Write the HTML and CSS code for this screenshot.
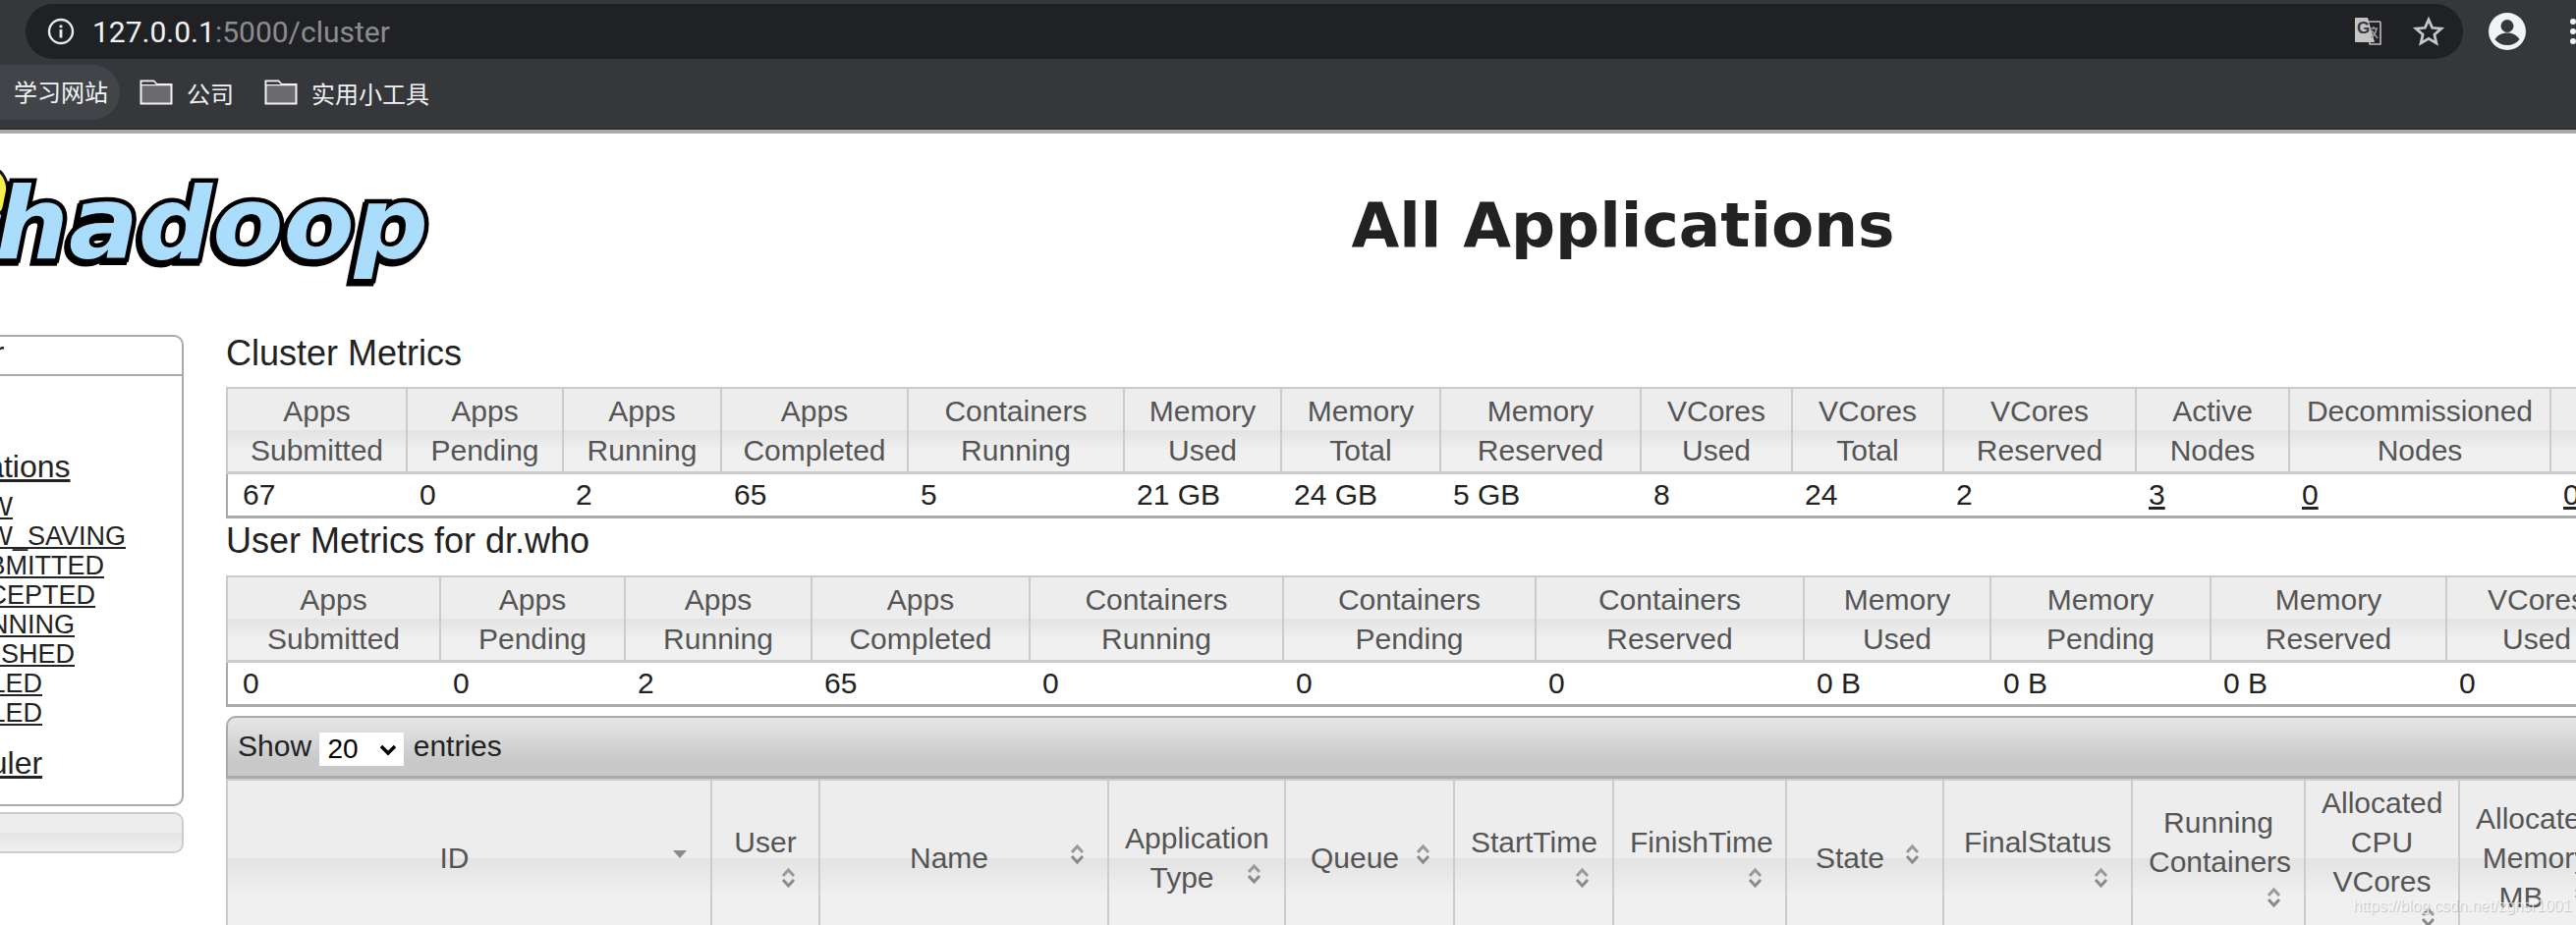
FILE: index.html
```html
<!DOCTYPE html>
<html lang="en">
<head>
<meta charset="utf-8">
<title>All Applications</title>
<link rel="stylesheet" href="styles.css">
</head>
<body>
<div class="browser">
  <div class="toolbar">
    <div class="omnibox">
      <svg class="info" width="28" height="28" viewBox="0 0 28 28"><circle cx="14" cy="14" r="12" fill="none" stroke="#e8eaed" stroke-width="2.4"/><rect x="12.6" y="12" width="2.8" height="8.5" fill="#e8eaed"/><rect x="12.6" y="7.5" width="2.8" height="2.8" fill="#e8eaed"/></svg>
      <span class="url"><span class="host">127.0.0.1</span>:5000/cluster</span>
      <svg class="translate" width="30" height="30" viewBox="0 0 30 30"><path d="M15 5h12a1 1 0 0 1 1 1v22H17z" fill="#202124" stroke="#bdbdbd" stroke-width="1.6"/><path d="M2 1h13l7 25H3a1 1 0 0 1-1-1z" fill="#c4c4c4"/><text x="4" y="17" class="translate-g">G</text><path d="M17 12h8M21 10v2M24 12c-1 5-3 8-6 9M19 14l6 8" fill="none" stroke="#9a9a9a" stroke-width="1.6"/></svg>
      <svg class="star" width="32" height="32" viewBox="0 0 32 32"><path d="M16 4l3.7 8.3 9 .9-6.8 6 2 8.8L16 23.400l-7.900 4.600 2-8.800-6.800-6 9-.9z" fill="none" stroke="#c4c5c7" stroke-width="2.800" stroke-linejoin="miter"/></svg>
    </div>
    <svg class="avatar" width="38" height="38" viewBox="0 0 38 38"><circle cx="19" cy="19" r="19" fill="#f1f3f4"/><circle cx="19" cy="13.500" r="6.500" fill="#36373b"/><path d="M6.500 27c3-5 8-6.500 12.500-6.500s9.500 1.500 12.500 6.500c-3 4-7.500 6-12.500 6s-9.500-2-12.500-6z" fill="#36373b"/></svg>
    <div class="dots"><i></i><i></i><i></i></div>
  </div>
  <div class="bookmarks">
    <span class="bm bm-active">学习网站</span>
    <svg class="folder" width="34" height="26" viewBox="0 0 34 26"><path d="M1.500 1.500h13l3 3.500h15v19.500h-31z" fill="#6b6b6e" stroke="#f1f3f4" stroke-width="2"/><path d="M2 5.500h30" stroke="#f1f3f4" stroke-width="1.500"/><path d="M2.500 2.500h12l2.500 2.500H2.500z" fill="#36373b"/></svg>
    <span class="bm">公司</span>
    <svg class="folder" width="34" height="26" viewBox="0 0 34 26"><path d="M1.500 1.500h13l3 3.500h15v19.500h-31z" fill="#6b6b6e" stroke="#f1f3f4" stroke-width="2"/><path d="M2 5.500h30" stroke="#f1f3f4" stroke-width="1.500"/><path d="M2.500 2.500h12l2.500 2.500H2.500z" fill="#36373b"/></svg>
    <span class="bm">实用小工具</span>
  </div>
</div>

<header class="page-head">
  <svg class="logo" width="450" height="170" viewBox="0 0 450 170">
    <ellipse cx="-7" cy="36" rx="15" ry="24" fill="#f4ef4f" stroke="#111" stroke-width="3"/>
    <text x="-5" y="103" textLength="441" lengthAdjust="spacingAndGlyphs" class="logo-text">hadoop</text>
  </svg>
  <h1>All Applications</h1>
</header>

<div class="layout">
  <nav class="side">
    <div class="side-box">
      <h3 class="side-title">Cluster</h3>
      <div class="side-body">
        <a href="#" class="side-link">About</a>
        <a href="#" class="side-link">Nodes</a>
        <a href="#" class="side-link">Applications</a>
        <ul class="states">
          <li><a href="#">NEW</a></li>
          <li><a href="#">NEW_SAVING</a></li>
          <li><a href="#">SUBMITTED</a></li>
          <li><a href="#">ACCEPTED</a></li>
          <li><a href="#">RUNNING</a></li>
          <li><a href="#">FINISHED</a></li>
          <li><a href="#">FAILED</a></li>
          <li><a href="#">KILLED</a></li>
        </ul>
        <a href="#" class="side-link side-sched">Scheduler</a>
      </div>
    </div>
    <div class="side-tools"></div>
  </nav>

  <main class="content">
    <h3 class="metrics-title">Cluster Metrics</h3>
    <table class="metrics metrics-cluster">
      <colgroup><col width="183"><col width="159"><col width="161"><col width="190"><col width="220"><col width="160"><col width="162"><col width="204"><col width="154"><col width="154"><col width="196"><col width="156"><col width="266"><col width="300"></colgroup>
      <thead><tr>
        <th>Apps Submitted</th><th>Apps Pending</th><th>Apps Running</th><th>Apps Completed</th><th>Containers Running</th><th>Memory Used</th><th>Memory Total</th><th>Memory Reserved</th><th>VCores Used</th><th>VCores Total</th><th>VCores Reserved</th><th>Active Nodes</th><th>Decommissioned Nodes</th><th>Lost Nodes</th>
      </tr></thead>
      <tbody><tr>
        <td>67</td><td>0</td><td>2</td><td>65</td><td>5</td><td>21 GB</td><td>24 GB</td><td>5 GB</td><td>8</td><td>24</td><td>2</td><td><a href="#">3</a></td><td><a href="#">0</a></td><td><a href="#">0</a></td>
      </tr></tbody>
    </table>

    <h3 class="metrics-title metrics-title-user">User Metrics for dr.who</h3>
    <table class="metrics metrics-user">
      <colgroup><col width="217"><col width="188"><col width="190"><col width="222"><col width="258"><col width="257"><col width="273"><col width="190"><col width="224"><col width="240"><col width="184"></colgroup>
      <thead><tr>
        <th>Apps Submitted</th><th>Apps Pending</th><th>Apps Running</th><th>Apps Completed</th><th>Containers Running</th><th>Containers Pending</th><th>Containers Reserved</th><th>Memory Used</th><th>Memory Pending</th><th>Memory Reserved</th><th>VCores Used</th>
      </tr></thead>
      <tbody><tr>
        <td>0</td><td>0</td><td>2</td><td>65</td><td>0</td><td>0</td><td>0</td><td>0 B</td><td>0 B</td><td>0 B</td><td>0</td>
      </tr></tbody>
    </table>

    <div class="table-bar">
      <label class="length">Show
        <span class="length-wrap"><select class="length-select"><option>20</option></select><svg class="length-arrow" width="18" height="12" viewBox="0 0 18 12"><path d="M2 2l7 7 7-7" fill="none" stroke="#000" stroke-width="3.500"/></svg></span>
        entries</label>
    </div>
    <table class="apps">
      <colgroup><col width="493"><col width="110"><col width="294"><col width="180"><col width="172"><col width="162"><col width="176"><col width="160"><col width="192"><col width="176"><col width="157"><col width="156"></colgroup>
      <thead><tr>
        <th>ID<span class="sort"><svg width="16" height="10" viewBox="0 0 16 10"><path d="M1 1h14l-7 8z" fill="#8a8a8a"/></svg></span></th>
        <th>User<span class="sort"><svg class="updown" width="15" height="22" viewBox="0 0 15 22"><use href="#sort-both"/></svg></span></th>
        <th>Name<span class="sort"><svg class="updown" width="15" height="22" viewBox="0 0 15 22"><use href="#sort-both"/></svg></span></th>
        <th>Application Type<span class="sort"><svg class="updown" width="15" height="22" viewBox="0 0 15 22"><use href="#sort-both"/></svg></span></th>
        <th>Queue<span class="sort"><svg class="updown" width="15" height="22" viewBox="0 0 15 22"><use href="#sort-both"/></svg></span></th>
        <th>StartTime<span class="sort"><svg class="updown" width="15" height="22" viewBox="0 0 15 22"><use href="#sort-both"/></svg></span></th>
        <th>FinishTime<span class="sort"><svg class="updown" width="15" height="22" viewBox="0 0 15 22"><use href="#sort-both"/></svg></span></th>
        <th>State<span class="sort"><svg class="updown" width="15" height="22" viewBox="0 0 15 22"><use href="#sort-both"/></svg></span></th>
        <th>FinalStatus<span class="sort"><svg class="updown" width="15" height="22" viewBox="0 0 15 22"><use href="#sort-both"/></svg></span></th>
        <th>Running Containers<span class="sort"><svg class="updown" width="15" height="22" viewBox="0 0 15 22"><use href="#sort-both"/></svg></span></th>
        <th>Allocated CPU VCores<span class="sort"><svg class="updown" width="15" height="22" viewBox="0 0 15 22"><use href="#sort-both"/></svg></span></th>
        <th>Allocated Memory MB<span class="sort"><svg class="updown" width="15" height="22" viewBox="0 0 15 22"><use href="#sort-both"/></svg></span></th>
      </tr></thead>
    </table>
  </main>
</div>

<div class="watermark">https://blog.csdn.net/zghsr1001</div>

<svg class="defs" width="0" height="0"><defs><g id="sort-both"><path d="M2 9l5.500-6 5.500 6" fill="none" stroke="#9a9a9a" stroke-width="3"/><path d="M2 13l5.500 6 5.500-6" fill="none" stroke="#8a8a8a" stroke-width="3"/></g></defs></svg>
</body>
</html>
```

FILE: styles.css
```css
* { box-sizing: border-box; }
html, body { margin: 0; height: 942px; overflow: hidden; background: #fff; }
body { font-family: "Liberation Sans", Arial, sans-serif; font-size: 30px; color: #222; position: relative; }

/* browser chrome */
.browser { background: #36373b; height: 136px; border-bottom: 4px solid #aaa; box-shadow: inset 0 -1px 0 #202124; }
.toolbar { height: 64px; padding: 4px 0 4px 26px; display: flex; align-items: center; }
.omnibox { width: 2481px; height: 56px; border-radius: 28px; background: #202124; display: flex; align-items: center; padding: 0 19px 0 22px; }
.info { flex: none; }
.url { margin-left: 18px; font-family: Roboto, sans-serif; font-size: 30px; color: #8c8d90; white-space: nowrap; }
.host { color: #f1f3f4; }
.translate { margin-left: auto; flex: none; }
.translate-g { font-family: "Liberation Sans", sans-serif; font-weight: 700; font-size: 17px; fill: #36373b; }
.star { margin-left: 31px; flex: none; }
.avatar { margin-left: 26px; flex: none; }
.dots { margin-left: 45px; display: flex; flex-direction: column; gap: 4px; }
.dots i { display: block; width: 6px; height: 6px; border-radius: 50%; background: #f1f3f4; }
.bookmarks { height: 68px; padding: 0 0 8px; display: flex; align-items: center; font-family: "Noto Sans CJK SC", sans-serif; font-size: 24px; color: #f1f3f4; }
.bm { white-space: nowrap; }
.bm-active { height: 56px; line-height: 54px; padding: 0 12px 0 14px; width: 122px; border-radius: 0 28px 28px 0; background: #43444a; }
.folder { flex: none; margin-left: 20px; margin-right: 14px; }
.folder + .bm + .folder { margin-left: 31px; }

/* page header */
.page-head { height: 204px; display: flex; align-items: flex-start; }
.logo { flex: none; margin-top: 24px; overflow: visible; }
.logo-text { font-family: "DejaVu Sans", sans-serif; font-weight: 700; font-style: italic; font-size: 102px; fill: #aadcfc; stroke: #000; stroke-width: 9px; paint-order: stroke; stroke-linejoin: miter; filter: drop-shadow(-2px 3px 0 #000); }
h1 { flex: 1; margin: 58px 0 0 232px; font-family: "DejaVu Sans", sans-serif; font-weight: 700; font-size: 63px; line-height: 72px; color: #222; text-align: center; }

/* layout */
.layout { display: flex; align-items: flex-start; }
.side { flex: none; width: 307px; margin-left: -120px; margin-top: 1px; font-size: 32px; }
.side-box { border: 2px solid #aaa; border-radius: 10px; background: #fff; height: 480px; }
.side-title { margin: 0; padding: 0 0 6px 21px; font-weight: 400; font-size: 32px; line-height: 32px; border-bottom: 2px solid #aaa; }
.side-body { padding: 2px 0 0 17px; }
.side-link { display: block; width: max-content; line-height: 36px; color: #222; text-decoration: underline; }
.side-sched { margin-top: 18px; }
.states { list-style: none; margin: 8px 0 0; padding: 0 0 0 51px; font-size: 27px; line-height: 30px; }
.states a { color: #222; }
.side-tools { height: 42px; margin-top: 6px; border: 2px solid #ccc; border-radius: 10px; background: linear-gradient(#ededed 0 50%, #e4e4e4 50%, #f0f0f0 100%); }

.content { flex: none; width: 3000px; margin-left: 43px; }
.metrics-title { margin: 0 0 14px; font-weight: 400; font-size: 36px; line-height: 40px; color: #222; }
.metrics-title-user { margin-top: 3px; margin-bottom: 15px; }

table { border-collapse: separate; border-spacing: 0; table-layout: fixed; }
.metrics-cluster { width: 2665px; }
.metrics-user { width: 2443px; }
.apps { width: 2428px; }
th { font-weight: 400; color: #555; line-height: 40px; text-align: center; vertical-align: middle; border-left: 2px solid #ccc; background: linear-gradient(#ededed 0 50%, #e3e3e3 50%, #f0f0f0 75%, #f0f0f0 100%); }
.metrics th { padding: 3px 16px 1px; border-top: 2px solid #ccc; border-bottom: 3px solid #ccc; }
.metrics td { padding: 0 0 0 14px; line-height: 42px; height: 45px; border-bottom: 3px solid #aaa; color: #222; }
.metrics td:first-child { border-left: 2px solid #aaa; padding-left: 15px; }
.metrics a { color: #222; }

.table-bar { margin-top: 9px; height: 64px; display: flex; align-items: center; padding: 2px 10px 0; border: 2px solid #aaa; border-width: 2px 0 3px 2px; border-radius: 10px 0 0 0; background: linear-gradient(#e6e6e6, #c8c8c8 75%); }
.length { color: #222; white-space: nowrap; }
.length-wrap { position: relative; display: inline-block; vertical-align: middle; margin: 0 1px 0 0; }
.length-select { display: block; width: 86px; height: 34px; padding: 0 0 0 8px; border: none; border-radius: 0; background: #fff; color: #000; font-family: "Liberation Sans", sans-serif; font-size: 28px; appearance: none; }
.length-arrow { position: absolute; right: 7px; top: 12px; }

.apps th { height: 160px; padding: 2px 16px; border-top: 2px solid #ccc; }
.sort { float: right; width: 30px; height: 32px; display: flex; align-items: center; justify-content: center; }
.sort svg { display: block; }

.watermark { position: absolute; left: 2395px; top: 910px; font-family: "Liberation Sans", sans-serif; font-size: 16px; line-height: 26px; color: rgba(255, 255, 255, .7); text-shadow: 1px 1px 1px rgba(0, 0, 0, .2); white-space: nowrap; }
.defs { position: absolute; }
```
